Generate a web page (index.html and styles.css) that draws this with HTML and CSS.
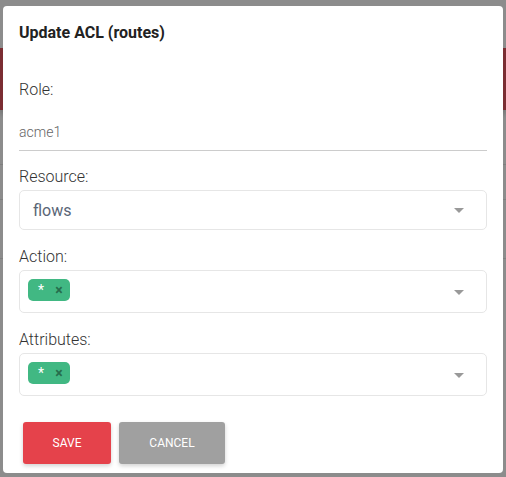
FILE: index.html
```html
<!DOCTYPE html>
<html lang="en">
<head>
    <meta charset="UTF-8">
    <meta name="viewport" content="width=device-width, initial-scale=1.0">
    <title>ACL</title>
    <link rel="stylesheet" href="styles.css">
</head>
<body>

<!-- Page behind the dialog -->
<div class="page">
    <div class="page-top"></div>
    <header class="page-header"></header>
    <div class="page-row page-row-first"></div>
    <div class="page-row"></div>
    <div class="page-row page-row-tall"></div>
</div>

<div class="backdrop"></div>

<div class="modal">
    <h3 class="modal-title">Update ACL (routes)</h3>

    <div class="field field-role">
        <label class="field-label">Role:</label>
        <div class="text-input">acme1</div>
    </div>

    <div class="field">
        <label class="field-label">Resource:</label>
        <div class="select">
            <span class="select-value">flows</span>
            <span class="caret"></span>
        </div>
    </div>

    <div class="field">
        <label class="field-label">Action:</label>
        <div class="select select-multi">
            <span class="tag">*<i class="tag-icon">&times;</i></span>
            <span class="caret"></span>
        </div>
    </div>

    <div class="field">
        <label class="field-label">Attributes:</label>
        <div class="select select-multi">
            <span class="tag">*<i class="tag-icon">&times;</i></span>
            <span class="caret"></span>
        </div>
    </div>

    <div class="modal-actions">
        <button class="btn btn-save">Save</button>
        <button class="btn btn-cancel">Cancel</button>
    </div>
</div>

</body>
</html>
```

FILE: styles.css
```css
/* Base */
body {
    margin: 0;
    font-family: 'Roboto', 'Liberation Sans', sans-serif;
    color: #333;
    background: #fff;
    overflow: hidden;
}

/* Page under the overlay */
.page {
    height: 477px;
}

.page-top {
    height: 48px;
}

.page-header {
    height: 62px;
    background: #e0525c;
    box-shadow: 0 4px 6px rgba(0, 0, 0, 0.2);
}

.page-row {
    height: 34px;
    border-bottom: 1px solid #e8e8e8;
}

.page-row-first {
    margin-top: 20px;
}

.page-row-tall {
    height: 58px;
}

.backdrop {
    position: fixed;
    inset: 0;
    background: rgba(0, 0, 0, 0.45);
}

/* Dialog */
.modal {
    position: fixed;
    top: 6px;
    left: 3px;
    width: 500px;
    height: 467px;
    box-sizing: border-box;
    padding: 16px 16px 0;
    background: #fff;
    border-radius: 4px;
}

.modal-title {
    margin: 0;
    font-size: 16px;
    line-height: 22px;
    font-weight: bold;
    color: #222;
}

.field {
    margin-top: 15px;
}

.field-role {
    margin-top: 34px;
}

.field-label {
    display: block;
    font-size: 16px;
    line-height: 24px;
    font-weight: 300;
    color: #333;
}

.text-input {
    margin-top: 12px;
    height: 36px;
    line-height: 36px;
    font-size: 14px;
    font-weight: 300;
    color: #666;
    border-bottom: 1px solid #ccc;
}

.field-role + .field {
    margin-top: 14px;
}

/* Select boxes */
.select {
    display: flex;
    align-items: center;
    justify-content: space-between;
    height: 40px;
    box-sizing: border-box;
    margin-top: 1px;
    padding: 0 22px 0 13px;
    border: 1px solid #e6e6e6;
    border-radius: 5px;
}

.select-value {
    font-size: 16px;
    color: #5a6676;
}

.select-multi {
    height: 43px;
    padding-left: 8px;
    align-items: flex-start;
    padding-top: 8px;
}

.select-multi .caret {
    margin-top: 11px;
}

.caret {
    width: 0;
    height: 0;
    border-style: solid;
    border-width: 5px 5px 0;
    border-color: #999 transparent transparent;
}

/* Tags */
.tag {
    position: relative;
    display: inline-block;
    padding: 4px 26px 4px 10px;
    border-radius: 5px;
    background: #41b883;
    color: #fff;
    font-size: 14px;
    line-height: 14px;
}

.tag-icon {
    position: absolute;
    right: 0;
    top: 0;
    width: 22px;
    line-height: 22px;
    text-align: center;
    font-style: normal;
    font-weight: bold;
    font-size: 14px;
    color: #266d4d;
}

/* Buttons */
.modal-actions {
    display: flex;
    gap: 8px;
    margin-top: 26px;
    padding-left: 4px;
}

.btn {
    height: 42px;
    border: none;
    border-radius: 3px;
    color: #fff;
    font-family: 'Roboto', 'Liberation Sans', sans-serif;
    font-size: 12px;
    text-transform: uppercase;
    box-shadow: 0 2px 4px rgba(0, 0, 0, 0.18);
    cursor: pointer;
}

.btn-save {
    width: 88px;
    background: #e5424b;
}

.btn-cancel {
    width: 106px;
    background: #a0a0a0;
}
```
